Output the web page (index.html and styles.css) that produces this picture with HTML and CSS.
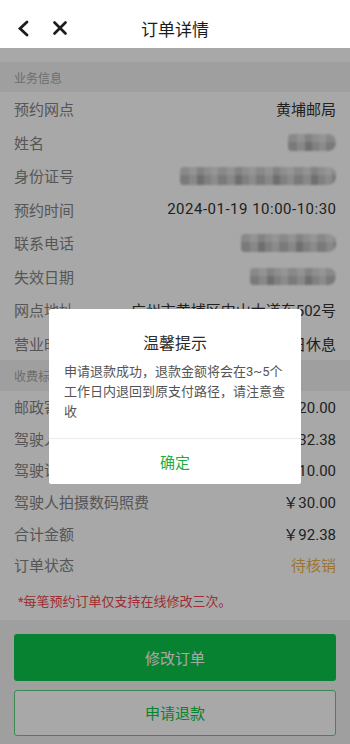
FILE: index.html
```html
<!DOCTYPE html>
<html lang="zh-CN">
<head>
<meta charset="utf-8">
<title>订单详情</title>
<link rel="stylesheet" href="styles.css">
</head>
<body>
<header class="nav">
  <div class="nav-side">
    <svg class="nav-icon" width="24" height="24" viewBox="0 0 24 24"><polyline points="15,6 8,12.5 15,19" fill="none" stroke="#1c1c1c" stroke-width="2.8" stroke-linejoin="miter" stroke-linecap="round"/></svg>
    <svg class="nav-icon" width="24" height="24" viewBox="0 0 24 24"><path d="M6.5 6.5 L17.5 17.5 M17.5 6.5 L6.5 17.5" fill="none" stroke="#1c1c1c" stroke-width="2.7" stroke-linecap="round"/></svg>
  </div>
  <div class="nav-title">订单详情</div>
  <div class="nav-side"></div>
</header>

<main class="page">
  <div class="top-gap"></div>
  <div class="sec-title">业务信息</div>
  <div class="list list-a">
    <div class="row"><span class="label">预约网点</span><span class="value">黄埔邮局</span></div>
    <div class="row"><span class="label">姓名</span><span class="mosaic mosaic-name"></span></div>
    <div class="row"><span class="label">身份证号</span><span class="mosaic mosaic-id"></span></div>
    <div class="row"><span class="label">预约时间</span><span class="value value-time">2024-01-19 10:00-10:30</span></div>
    <div class="row"><span class="label">联系电话</span><span class="mosaic mosaic-phone"></span></div>
    <div class="row"><span class="label">失效日期</span><span class="mosaic mosaic-date"></span></div>
    <div class="row"><span class="label">网点地址</span><span class="value">广州市黄埔区中山大道东502号</span></div>
    <div class="row"><span class="label">营业时间</span><span class="value">8:30-17:00 周日休息</span></div>
  </div>
  <div class="sec-title sec-title-b">收费标准</div>
  <div class="list list-b">
    <div class="row"><span class="label">邮政寄递费</span><span class="value">￥20.00</span></div>
    <div class="row"><span class="label">驾驶人体检费</span><span class="value">￥32.38</span></div>
    <div class="row"><span class="label">驾驶证工本费</span><span class="value">￥10.00</span></div>
    <div class="row"><span class="label">驾驶人拍摄数码照费</span><span class="value">￥30.00</span></div>
    <div class="row"><span class="label">合计金额</span><span class="value">￥92.38</span></div>
    <div class="row"><span class="label">订单状态</span><span class="value status">待核销</span></div>
  </div>
  <div class="note">*每笔预约订单仅支持在线修改三次。</div>
  <div class="footer">
    <div class="btn btn-primary">修改订单</div>
    <div class="btn btn-outline">申请退款</div>
  </div>
</main>

<div class="mask">
  <div class="dialog">
    <div class="dialog-title">温馨提示</div>
    <div class="dialog-body">申请退款成功，退款金额将会在3~5个工作日内退回到原支付路径，请注意查收</div>
    <div class="dialog-btn">确定</div>
  </div>
</div>
</body>
</html>
```

FILE: styles.css
```css
* { box-sizing: border-box; margin: 0; padding: 0; }

html, body {
  width: 350px;
  height: 744px;
  overflow: hidden;
}

body {
  background: #f2f2f2;
  font-family: Roboto, "Noto Sans CJK SC", sans-serif;
  color: #333;
}

.nav {
  height: 48px;
  padding-top: 8px;
  background: #fff;
  display: flex;
  align-items: center;
}

.nav-side {
  width: 80px;
  display: flex;
  align-items: center;
  gap: 12px;
  padding-left: 12px;
}

.nav-icon { display: block; }

.nav-title {
  flex: 1;
  text-align: center;
  font-size: 17px;
  color: #1c1c1c;
}

.page {
  display: flex;
  flex-direction: column;
}

.top-gap {
  height: 14px;
  background: #fff;
}

.sec-title {
  height: 30px;
  padding-left: 14px;
  display: flex;
  align-items: center;
  font-size: 12px;
  color: #a6a6a6;
  background: #f1f1f1;
}

.sec-title-b { height: 31px; }

.list { background: #fff; }

.row {
  display: flex;
  align-items: center;
  justify-content: space-between;
  padding: 0 14px;
  font-size: 15px;
}

.list-a .row { height: 33.5px; }
.list-b .row { height: 31.6px; }

.label { color: #838383; white-space: nowrap; }
.value { color: #333; white-space: nowrap; }
.value-time { letter-spacing: 0.5px; margin-right: -0.5px; }
.status { color: #eeb24e; }

.mosaic {
  display: block;
  height: 17px;
  border-radius: 4px 8px 8px 4px;
  filter: blur(0.8px);
  background-color: #c8c8c8;
  background-image:
    linear-gradient(180deg, rgba(255,255,255,0.35) 0 45%, rgba(0,0,0,0) 45% 100%),
    repeating-linear-gradient(90deg, #b9b9b9 0 9px, #cfcfcf 9px 17px, #a9a9a9 17px 24px, #c3c3c3 24px 31px, #d4d4d4 31px 38px);
}

.mosaic-name { width: 48px; }
.mosaic-id { width: 156px; height: 18px; }
.mosaic-phone { width: 95px; height: 18px; }
.mosaic-date { width: 86px; }

.note {
  height: 39px;
  background: #fff;
  padding-left: 18px;
  display: flex;
  align-items: center;
  font-size: 13px;
  color: #f0464c;
}

.footer {
  background: #f2f2f2;
  padding: 14px 14px 0;
  display: flex;
  flex-direction: column;
  gap: 9px;
}

.btn {
  height: 47px;
  border-radius: 3px;
  display: flex;
  align-items: center;
  justify-content: center;
  font-size: 15px;
}

.btn-primary {
  background: #0cc54b;
  color: #fff;
}

.btn-outline {
  height: 46px;
  background: #fff;
  border: 1px solid #5fd07f;
  color: #0cc54b;
}

.mask {
  position: fixed;
  top: 48px;
  left: 0;
  right: 0;
  bottom: 0;
  background: rgba(0, 0, 0, 0.34);
  display: flex;
  align-items: center;
  justify-content: center;
}

.dialog {
  width: 252px;
  background: #fff;
  border-radius: 2px;
  display: flex;
  flex-direction: column;
}

.dialog-title {
  padding-top: 24px;
  line-height: 22px;
  text-align: center;
  font-size: 16px;
  color: #2b2b2b;
}

.dialog-body {
  margin-top: 7px;
  padding: 0 15px 16px;
  font-size: 13px;
  line-height: 20px;
  color: #555;
  border-bottom: 1px solid #ececec;
}

.dialog-btn {
  height: 45px;
  display: flex;
  align-items: center;
  justify-content: center;
  font-size: 15px;
  color: #1aad3f;
}
```
